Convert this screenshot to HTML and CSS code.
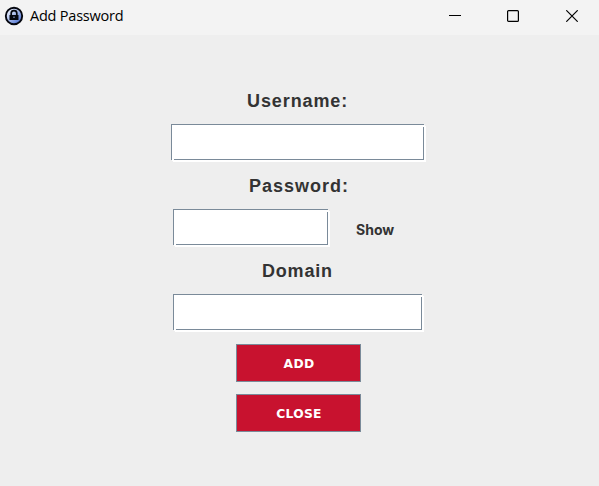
FILE: index.html
```html
<!DOCTYPE html>
<html lang="en">
<head>
<meta charset="utf-8">
<title>Add Password</title>
<link rel="stylesheet" href="styles.css">
</head>
<body>
<header class="titlebar">
  <svg class="app-icon" width="20" height="20" viewBox="0 0 20 20">
    <defs><linearGradient id="disc" x1="0" y1="0" x2="1" y2="1"><stop offset=".15" stop-color="#eef3ff"/><stop offset=".8" stop-color="#5d7fd6"/></linearGradient></defs>
    <circle cx="10" cy="10" r="8.2" fill="url(#disc)" stroke="#05070f" stroke-width="1.9"/>
    <path d="M7.2 9V7.2a2.8 2.5 0 0 1 5.6 0V9" fill="none" stroke="#05070f" stroke-width="1.7"/>
    <path d="M5.5 9h9v5h-9z" fill="#05070f"/>
    <path d="M9.5 10.4h1v1.6h-1z" fill="#9fb5ee"/>
  </svg>
  <h1 class="title">Add Password</h1>
  <div class="controls">
    <svg width="12" height="12" viewBox="0 0 12 12"><path d="M0 5.5h12" stroke="#000"/></svg>
    <svg width="12" height="12" viewBox="0 0 12 12"><rect x=".6" y=".6" width="10.8" height="10.8" rx="1" fill="none" stroke="#000" stroke-width="1.2"/></svg>
    <svg width="12" height="12" viewBox="0 0 12 12"><path d="M.3.3l11.4 11.4M11.7.3.3 11.7" stroke="#000" stroke-width="1.2"/></svg>
  </div>
</header>
<main class="form">
  <label class="label username-label" for="username">Username:</label>
  <div class="field username"><input id="username" type="text"></div>
  <label class="label password-label" for="password">Password:</label>
  <div class="row">
    <div class="field password"><input id="password" type="password"></div>
    <span class="show">Show</span>
  </div>
  <label class="label domain-label" for="domain">Domain</label>
  <div class="field domain"><input id="domain" type="text"></div>
  <button class="button" type="button">ADD</button>
  <button class="button" type="button">CLOSE</button>
</main>
</body>
</html>
```
FILE: styles.css
```css
* { box-sizing: border-box; }
body { margin: 0; height: 486px; background: #eee; overflow: hidden; font-family: "Liberation Sans", sans-serif; }
.titlebar { display: flex; align-items: center; height: 35px; padding: 0 21px 0 4px; background: #f3f3f3; }
.app-icon { margin-top: -3px; }
.title { margin: -4px 0 0 6px; font: 400 14.5px/20px "Open Sans", sans-serif; letter-spacing: -0.22px; color: #000; }
.controls { display: flex; gap: 47px; margin: -3px 0 0 auto; }
.controls svg { display: block; }
.controls svg:first-child { margin-right: -1px; }
.form { display: flex; flex-direction: column; align-items: flex-start; padding-top: 53px; }
.label { height: 26px; margin-bottom: 10px; font-weight: 700; font-size: 18px; line-height: 26px; letter-spacing: 0.9px; color: #333; }
.username-label { margin-left: 247px; }
.password-label { margin-left: 249px; letter-spacing: 1px; }
.domain-label { margin-left: 262px; letter-spacing: 0.8px; }
.field { position: relative; height: 36px; margin: 0 0 13px 173px; border: 1px solid #7a8a99; background: #fff; box-shadow: 1px 1px #fff, 2px 2px #fff; }
.field::before, .field::after { content: ""; position: absolute; background: #fff; }
/* breaks in the etched border at two opposite corners */
.field::before { left: 0; bottom: -1px; width: 2px; height: 1px; }
.field::after { right: -1px; top: 0; width: 1px; height: 2px; }
.field input { display: block; width: 100%; height: 100%; padding: 0 6px; border: 0; outline: 0; background: transparent; }
.username { width: 253px; margin-left: 171px; }
.password { width: 155px; }
.domain { width: 249px; margin-bottom: 14px; }
.row { display: flex; }
.show { margin: 11px 0 0 28px; font: 700 14px/20px Inter, sans-serif; color: #333; }
.button { width: 125px; height: 38px; margin: 0 0 12px 236px; padding: 2px 0 0 1px; border: 1px solid #7a8a99; border-radius: 0; background: #c8122f; color: #fff; font: 700 12.3px/20px "DejaVu Sans", sans-serif; letter-spacing: 0.3px; }
```
